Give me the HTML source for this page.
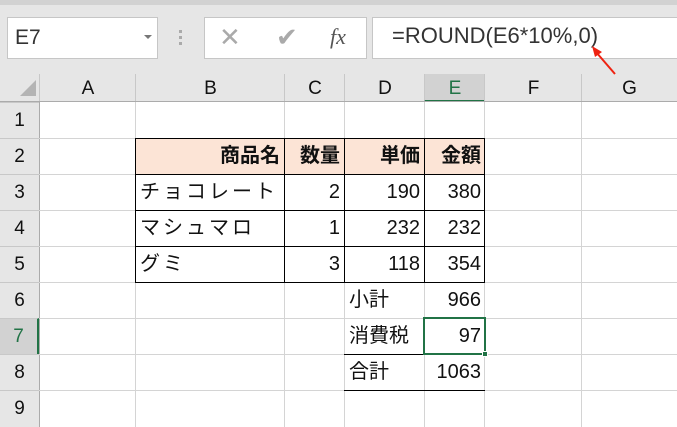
<!DOCTYPE html>
<html><head><meta charset="utf-8"><style>
*{margin:0;padding:0;box-sizing:border-box}
body{width:677px;height:427px;overflow:hidden;background:#e6e6e6;font-family:"Liberation Sans","Noto Sans CJK JP",sans-serif;position:relative}
.abs{position:absolute}
.box{position:absolute;background:#fff;border:1px solid #c6c6c6}
.ch{position:absolute;top:74px;height:28px;text-align:center;font-size:19px;line-height:30px;color:#111;border-left:1px solid #c8c8c8}
.rh{position:absolute;left:0;width:39px;height:36px;text-align:center;font-size:19px;line-height:36px;color:#111;border-top:1px solid #c8c8c8}
.grid{position:absolute;left:39px;top:102px;width:638px;height:325px;background:#fff}
.vl{position:absolute;top:0;width:1px;height:325px;background:#d4d4d4}
.hl{position:absolute;left:0;height:1px;width:638px;background:#d4d4d4}
.c{position:absolute;font-size:20px;line-height:36px;height:36px;color:#111;padding:0 4px}
.r{text-align:right}
.b{font-weight:bold}
</style></head><body>
<div class="abs" style="left:0;top:0;width:677px;height:5px;background:#d2d2d2"></div>
<div class="box" style="left:7px;top:17px;width:151px;height:42px"><span class="abs" style="left:7px;top:8px;font-size:21px;color:#333">E7</span><span class="abs" style="left:136px;top:17px;width:0;height:0;border-left:4px solid transparent;border-right:4px solid transparent;border-top:4px solid #777"></span></div>
<div class="abs" style="left:179px;top:30px;width:3px;height:3px;background:#aaa;box-shadow:0 6px 0 #aaa,0 12px 0 #aaa"></div>
<div class="box" style="left:204px;top:17px;width:163px;height:42px">
<span class="abs" style="left:14px;top:4px;font-size:26px;color:#aaa">✕</span>
<span class="abs" style="left:71px;top:4px;font-size:26px;color:#aaa">✔</span>
<span class="abs" style="left:125px;top:6px;font-size:22px;font-style:italic;font-family:'Liberation Serif',serif;color:#555">fx</span></div>
<div class="box" style="left:372px;top:17px;width:310px;height:42px"><span class="abs" style="left:19px;top:5px;font-size:22px;color:#333">=ROUND(E6*10%,0)</span></div>
<svg class="abs" style="left:588px;top:44px" width="32" height="34"><line x1="27" y1="30" x2="8" y2="8" stroke="#e21" stroke-width="2"/><polygon points="4,2 14,8 7,13" fill="#e21"/></svg>
<div class="abs" style="left:20px;top:80px;width:0;height:0;border-left:16px solid transparent;border-bottom:16px solid #b4b4b4"></div>
<div class="ch" style="left:39px;width:97px">A</div>
<div class="ch" style="left:135px;width:150px">B</div>
<div class="ch" style="left:284px;width:61px">C</div>
<div class="ch" style="left:344px;width:81px">D</div>
<div class="ch" style="left:424px;width:61px;background:#d2d2d2;color:#217346;border-bottom:2px solid #217346">E</div>
<div class="ch" style="left:484px;width:98px">F</div>
<div class="ch" style="left:581px;width:96px">G</div>
<div class="abs" style="left:0;top:101px;width:677px;height:1px;background:#ababab"></div>
<div class="rh" style="top:102px">1</div><div class="rh" style="top:138px">2</div><div class="rh" style="top:174px">3</div><div class="rh" style="top:210px">4</div><div class="rh" style="top:246px">5</div><div class="rh" style="top:282px">6</div><div class="rh" style="top:318px;background:#d2d2d2;color:#217346;border-right:2px solid #217346">7</div><div class="rh" style="top:354px">8</div><div class="rh" style="top:390px;height:37px">9</div>
<div class="grid">
<div class="vl" style="left:0;background:#ababab"></div>
<div class="vl" style="left:96px"></div><div class="vl" style="left:245px"></div><div class="vl" style="left:305px"></div><div class="vl" style="left:385px"></div><div class="vl" style="left:445px"></div><div class="vl" style="left:542px"></div>
<div class="hl" style="top:36px"></div><div class="hl" style="top:72px"></div><div class="hl" style="top:108px"></div><div class="hl" style="top:144px"></div><div class="hl" style="top:180px"></div><div class="hl" style="top:216px"></div><div class="hl" style="top:252px"></div><div class="hl" style="top:288px"></div>
<div class="abs" style="left:96px;top:36px;width:350px;height:36px;background:#fce4d6"></div>
<div class="abs" style="left:96px;top:36px;width:350px;height:145px;border:1px solid #000"></div>
<div class="abs" style="left:96px;top:72px;width:350px;height:1px;background:#000"></div>
<div class="abs" style="left:96px;top:108px;width:350px;height:1px;background:#000"></div>
<div class="abs" style="left:96px;top:144px;width:350px;height:1px;background:#000"></div>
<div class="abs" style="left:245px;top:36px;width:1px;height:145px;background:#000"></div>
<div class="abs" style="left:305px;top:36px;width:1px;height:145px;background:#000"></div>
<div class="abs" style="left:385px;top:36px;width:1px;height:145px;background:#000"></div>
<div class="abs" style="left:305px;top:252px;width:141px;height:1px;background:#000"></div>
<div class="abs" style="left:305px;top:288px;width:141px;height:1px;background:#000"></div>
<div class="c r b" style="left:97px;top:36px;width:148px">商品名</div>
<div class="c r b" style="left:246px;top:36px;width:59px">数量</div>
<div class="c r b" style="left:306px;top:36px;width:79px">単価</div>
<div class="c r b" style="left:386px;top:36px;width:60px">金額</div>
<div class="c" style="left:97px;top:72px;letter-spacing:3px">チョコレート</div>
<div class="c r" style="left:246px;top:72px;width:59px">2</div><div class="c r" style="left:306px;top:72px;width:79px">190</div><div class="c r" style="left:386px;top:72px;width:60px">380</div>
<div class="c" style="left:97px;top:108px;letter-spacing:3px">マシュマロ</div>
<div class="c r" style="left:246px;top:108px;width:59px">1</div><div class="c r" style="left:306px;top:108px;width:79px">232</div><div class="c r" style="left:386px;top:108px;width:60px">232</div>
<div class="c" style="left:97px;top:144px;letter-spacing:3px">グミ</div>
<div class="c r" style="left:246px;top:144px;width:59px">3</div><div class="c r" style="left:306px;top:144px;width:79px">118</div><div class="c r" style="left:386px;top:144px;width:60px">354</div>
<div class="c" style="left:306px;top:180px">小計</div><div class="c r" style="left:386px;top:180px;width:60px">966</div>
<div class="c" style="left:306px;top:216px">消費税</div><div class="c r" style="left:386px;top:216px;width:60px">97</div>
<div class="c" style="left:306px;top:252px">合計</div><div class="c r" style="left:386px;top:252px;width:60px">1063</div>
<div class="abs" style="left:384px;top:215px;width:63px;height:38px;border:2px solid #217346"></div>
<div class="abs" style="left:443px;top:249px;width:6px;height:6px;background:#217346;border:1px solid #fff"></div>
</div>
</body></html>
